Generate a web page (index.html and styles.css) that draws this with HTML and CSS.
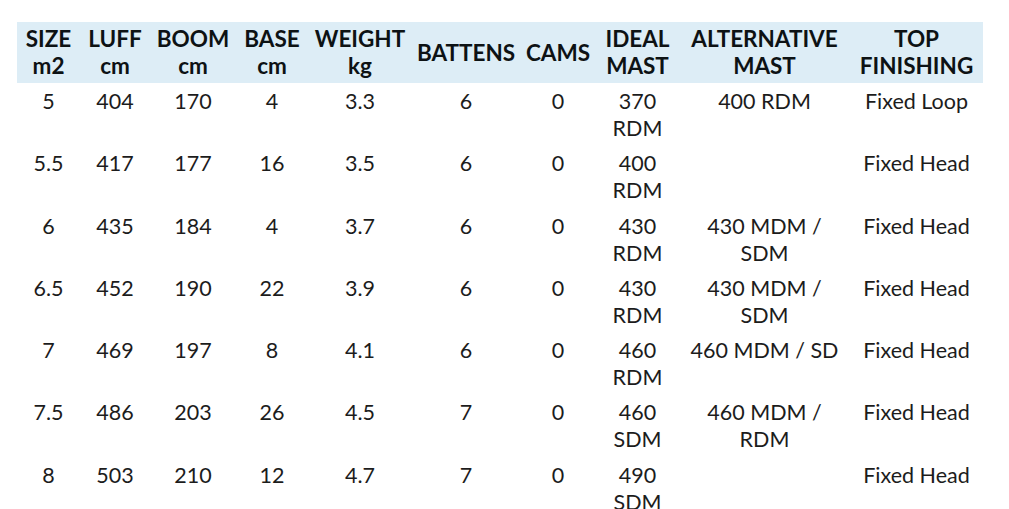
FILE: index.html
```html
<!DOCTYPE html>
<html>
<head>
<meta charset="utf-8">
<link rel="stylesheet" href="styles.css">
</head>
<body>
<table class="specs">
  <colgroup>
    <col class="c1"><col class="c2"><col class="c3"><col class="c4"><col class="c5">
    <col class="c6"><col class="c7"><col class="c8"><col class="c9"><col class="c10">
  </colgroup>
  <thead>
    <tr>
      <th>SIZE m2</th><th>LUFF cm</th><th>BOOM cm</th><th>BASE cm</th><th>WEIGHT kg</th>
      <th>BATTENS</th><th>CAMS</th><th>IDEAL MAST</th><th>ALTERNATIVE MAST</th><th>TOP FINISHING</th>
    </tr>
  </thead>
  <tbody>
    <tr><td>5</td><td>404</td><td>170</td><td>4</td><td>3.3</td><td>6</td><td>0</td><td>370 RDM</td><td>400 RDM</td><td>Fixed Loop</td></tr>
    <tr><td>5.5</td><td>417</td><td>177</td><td>16</td><td>3.5</td><td>6</td><td>0</td><td>400 RDM</td><td></td><td>Fixed Head</td></tr>
    <tr><td>6</td><td>435</td><td>184</td><td>4</td><td>3.7</td><td>6</td><td>0</td><td>430 RDM</td><td>430 MDM / SDM</td><td>Fixed Head</td></tr>
    <tr><td>6.5</td><td>452</td><td>190</td><td>22</td><td>3.9</td><td>6</td><td>0</td><td>430 RDM</td><td>430 MDM / SDM</td><td>Fixed Head</td></tr>
    <tr><td>7</td><td>469</td><td>197</td><td>8</td><td>4.1</td><td>6</td><td>0</td><td>460 RDM</td><td>460 MDM / SD</td><td>Fixed Head</td></tr>
    <tr><td>7.5</td><td>486</td><td>203</td><td>26</td><td>4.5</td><td>7</td><td>0</td><td>460 SDM</td><td>460 MDM / RDM</td><td>Fixed Head</td></tr>
    <tr><td>8</td><td>503</td><td>210</td><td>12</td><td>4.7</td><td>7</td><td>0</td><td>490 SDM</td><td></td><td>Fixed Head</td></tr>
  </tbody>
</table>
</body>
</html>
```
FILE: styles.css
```css
html, body {
  margin: 0;
  background: #ffffff;
}
body {
  padding: 22px 0 0 17px;
  font-family: Lato, "Open Sans", sans-serif;
}
.specs {
  border-collapse: collapse;
  table-layout: fixed;
  width: 966px;
}
.c1 { width: 63px; }
.c2 { width: 70px; }
.c3 { width: 86px; }
.c4 { width: 72px; }
.c5 { width: 104px; }
.c6 { width: 108px; }
.c7 { width: 76px; }
.c8 { width: 83px; }
.c9 { width: 171px; }
.c10 { width: 133px; }
.specs th {
  background: #ddedf6;
  color: #0d1214;
  font-weight: 700;
  font-size: 22.5px;
  line-height: 27px;
  padding: 3px 3px 4px;
  text-align: center;
  vertical-align: middle;
}
.specs td {
  color: #1c1c1c;
  font-size: 21.5px;
  line-height: 27px;
  padding: 5px 4px 3.3px;
  text-align: center;
  vertical-align: top;
}
```
